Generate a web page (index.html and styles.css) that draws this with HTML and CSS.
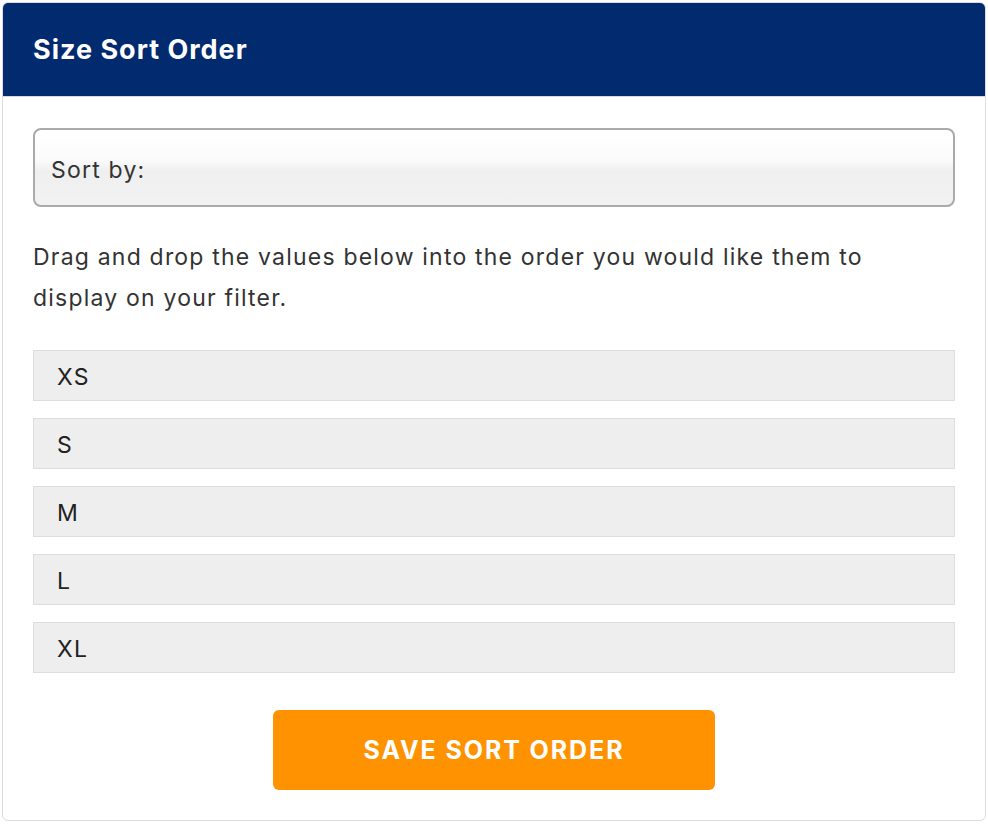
FILE: index.html
```html
<!DOCTYPE html>
<html lang="en">
<head>
<meta charset="utf-8">
<title>Size Sort Order</title>
<link rel="stylesheet" href="styles.css">
</head>
<body>
<section class="panel">
  <header class="panel-header">
    <h1 class="panel-title">Size Sort Order</h1>
  </header>
  <div class="panel-body">
    <div class="select">Sort by:</div>
    <p class="hint">Drag and drop the values below into the order you would like them to display on your filter.</p>
    <ul class="sort-list">
      <li class="sort-item">XS</li>
      <li class="sort-item">S</li>
      <li class="sort-item">M</li>
      <li class="sort-item">L</li>
      <li class="sort-item">XL</li>
    </ul>
    <div class="actions">
      <button class="btn-save" type="button">SAVE SORT ORDER</button>
    </div>
  </div>
</section>
</body>
</html>
```

FILE: styles.css
```css
* { box-sizing: border-box; }

html, body {
  margin: 0;
  background: #fff;
}

body {
  padding: 2px;
  font-family: Inter, "Noto Sans", sans-serif;
  color: #333;
}

.panel {
  width: 984px;
  border: 1px solid #dcdcdc;
  border-radius: 6px;
  overflow: hidden;
}

.panel-header {
  height: 94px;
  background: #022a6e;
  border-bottom: 1px solid #d8d8d8;
  display: flex;
  align-items: center;
  padding: 0 30px;
}

.panel-title {
  margin: 0;
  color: #fff;
  font-size: 27px;
  font-weight: 700;
  letter-spacing: 1px;
}

.panel-body {
  padding: 31px 30px 30px;
}

.select {
  height: 79px;
  border: 2px solid #aaa;
  border-radius: 8px;
  background: linear-gradient(#ffffff 0%, #fbfbfb 40%, #efefef 55%, #f2f2f2 100%);
  display: flex;
  align-items: center;
  padding: 4px 16px 0;
  font-size: 23px;
  letter-spacing: 1.2px;
  color: #333;
}

.hint {
  margin: 30px 0 31px;
  font-size: 23px;
  line-height: 41px;
  letter-spacing: 1.2px;
  color: #333;
}

.sort-list {
  list-style: none;
  margin: 0;
  padding: 0;
  display: flex;
  flex-direction: column;
  gap: 17px;
}

.sort-item {
  height: 51px;
  background: #eeeeee;
  border: 1px solid #dedede;
  display: flex;
  align-items: center;
  padding: 2px 23px 0;
  font-size: 23px;
  letter-spacing: 1.2px;
  color: #222;
}

.actions {
  display: flex;
  justify-content: center;
  margin-top: 37px;
}

.btn-save {
  width: 442px;
  height: 80px;
  border: 0;
  border-radius: 6px;
  background: #ff9200;
  color: #fff;
  font-family: Inter, "Noto Sans", sans-serif;
  font-size: 25px;
  font-weight: 700;
  letter-spacing: 1.9px;
}
```
